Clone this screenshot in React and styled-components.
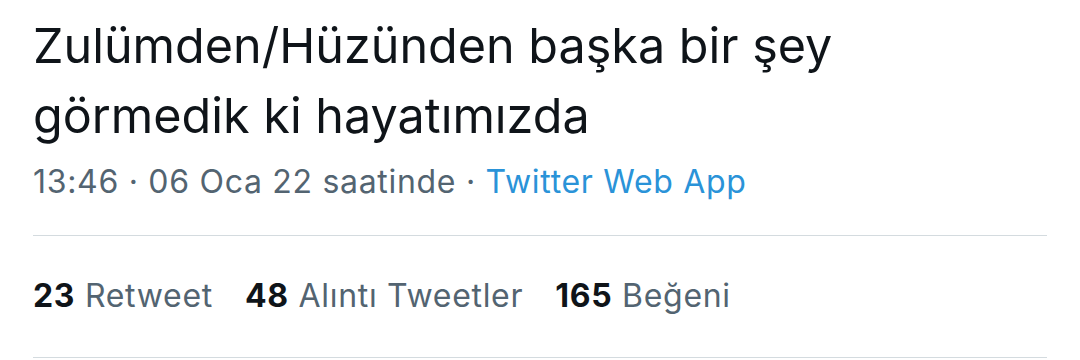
import React from "react";
import styled, { createGlobalStyle } from "styled-components";

const Global = createGlobalStyle`
  html, body { margin: 0; padding: 0; background: #ffffff; }
  body { font-family: Inter, Roboto, "Noto Sans", sans-serif; -webkit-font-smoothing: antialiased; }
`;

const Tweet = styled.article`
  width: 1080px;
  height: 360px;
  box-sizing: border-box;
  padding: 11px 33px 0 33px;
  display: flex;
  flex-direction: column;
  overflow: hidden;
`;

const Body = styled.p`
  margin: 0;
  font-size: 48.5px;
  line-height: 70px;
  color: #0f1419;
`;

const Meta = styled.div`
  margin-top: 10px;
  font-size: 32px;
  line-height: 42px;
  letter-spacing: 0.7px;
  color: #536471;
  padding-bottom: 32px;
  border-bottom: 1.5px solid #d4dbdf;
`;

const Source = styled.span`
  color: #2a93d8;
`;

const Stats = styled.div`
  display: flex;
  gap: 32px;
  padding: 39px 0 40px;
  font-size: 32px;
  line-height: 42px;
  letter-spacing: 0.7px;
  border-bottom: 1.5px solid #d4dbdf;
`;

const Stat = styled.span`
  color: #536471;
`;

const Count = styled.b`
  color: #0f1419;
  font-weight: 700;
`;

export default function App() {
  return (
    <>
      <Global />
      <Tweet>
        <Body>
          Zulümden/Hüzünden başka bir şey
          <br />
          görmedik ki hayatımızda
        </Body>
        <Meta>
          13:46 · 06 Oca 22 saatinde · <Source>Twitter Web App</Source>
        </Meta>
        <Stats>
          <Stat><Count>23</Count> Retweet</Stat>
          <Stat><Count>48</Count> Alıntı Tweetler</Stat>
          <Stat><Count>165</Count> Beğeni</Stat>
        </Stats>
      </Tweet>
    </>
  );
}
